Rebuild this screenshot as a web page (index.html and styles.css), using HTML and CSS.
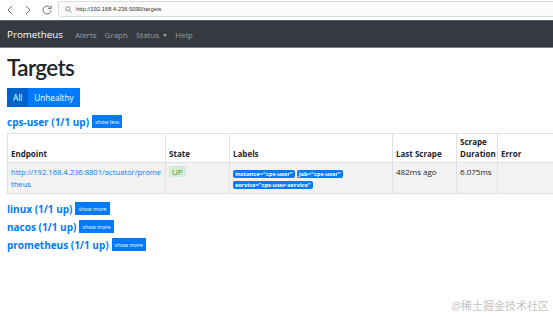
FILE: index.html
```html
<!DOCTYPE html>
<html lang="en">
  <head>
    <meta charset="UTF-8" />
    <meta name="viewport" content="width=device-width, initial-scale=1.0" />
    <title>Prometheus Time Series Collection and Processing Server</title>
    <link rel="stylesheet" href="styles.css">
  </head>
  <body>
    <div class="browser-bar">
      <svg class="tool-icon" width="10" height="12" viewBox="0 0 10 12">
        <path d="M7 2 L3 6 L7 10" fill="none" stroke="#6b6f73" stroke-width="1" />
      </svg>
      <svg class="tool-icon" width="10" height="12" viewBox="0 0 10 12">
        <path d="M3 2 L7 6 L3 10" fill="none" stroke="#6b6f73" stroke-width="1" />
      </svg>
      <svg class="tool-icon" width="12" height="12" viewBox="0 0 12 12">
        <path d="M9.6 4.2 A4 4 0 1 0 10 6.5" fill="none" stroke="#6b6f73" stroke-width="1" />
        <path d="M10.2 1.6 L10.2 4.6 L7.2 4.6" fill="none" stroke="#6b6f73" stroke-width="1" />
      </svg>
      <div class="address">
        <svg width="7" height="7" viewBox="0 0 7 7">
          <circle cx="2.8" cy="2.8" r="2.1" fill="none" stroke="#777" stroke-width="0.8" />
          <path d="M4.4 4.4 L6.5 6.5" stroke="#777" stroke-width="0.8" />
        </svg>
        <span class="url">http://192.168.4.236:9090/targets</span>
      </div>
    </div>

    <nav class="navbar">
      <a class="brand" href="#">Prometheus</a>
      <a class="nav-link" href="#">Alerts</a>
      <a class="nav-link" href="#">Graph</a>
      <a class="nav-link" href="#">Status <span class="caret"></span></a>
      <a class="nav-link" href="#">Help</a>
    </nav>

    <main class="container">
      <h1>Targets</h1>
      <div class="btn-group">
        <button class="btn btn-active">All</button>
        <button class="btn">Unhealthy</button>
      </div>

      <div class="pool">
        <div class="pool-head">
          <a href="#">cps-user (1/1 up)</a>
          <button class="btn-xs">show less</button>
        </div>
        <table class="targets">
          <colgroup>
            <col style="width: 158px" />
            <col style="width: 64px" />
            <col style="width: 163px" />
            <col style="width: 64px" />
            <col style="width: 41px" />
            <col />
          </colgroup>
          <thead>
            <tr>
              <th>Endpoint</th>
              <th>State</th>
              <th>Labels</th>
              <th>Last Scrape</th>
              <th>Scrape Duration</th>
              <th>Error</th>
            </tr>
          </thead>
          <tbody>
            <tr>
              <td class="endpoint"><a href="#">http://192.168.4.236:8801/actuator/prometheus</a></td>
              <td><span class="state-up">UP</span></td>
              <td class="labels">
                <span class="label">instance="cps-user"</span>
                <span class="label">job="cps-user"</span>
                <span class="label">service="cps-user-service"</span>
              </td>
              <td>482ms ago</td>
              <td>6.075ms</td>
              <td></td>
            </tr>
          </tbody>
        </table>
      </div>

      <div class="pool-head">
        <a href="#">linux (1/1 up)</a>
        <button class="btn-xs">show more</button>
      </div>
      <div class="pool-head">
        <a href="#">nacos (1/1 up)</a>
        <button class="btn-xs">show more</button>
      </div>
      <div class="pool-head">
        <a href="#">prometheus (1/1 up)</a>
        <button class="btn-xs">show more</button>
      </div>
    </main>

    <div class="watermark">@稀土掘金技术社区</div>
  </body>
</html>
```

FILE: styles.css
```css
body {
  margin: 0;
  overflow: hidden;
  font-family: "Open Sans", "Noto Sans CJK SC", sans-serif;
  color: #212529;
  background-color: #fff;
}
a {
  text-decoration: none;
}
.browser-bar {
  height: 20px;
  display: flex;
  align-items: center;
  padding-left: 5px;
  background-color: #fff;
}
.tool-icon {
  flex: none;
  margin-right: 8px;
}
.address {
  flex: 1;
  height: 14px;
  margin-top: -2px;
  margin-left: -3px;
  margin-right: -4px;
  display: flex;
  align-items: center;
  gap: 4px;
  padding-left: 6px;
  border: 1px solid #dcdcdc;
  border-radius: 2px;
  background-color: #fafafa;
}
.url {
  font-family: "Liberation Sans", sans-serif;
  font-size: 5.8px;
  color: #333;
}
.navbar {
  display: flex;
  align-items: center;
  padding: 0 7px;
  background-color: #343a40;
  border-top: 1px solid #5b6066;
  border-bottom: 1px solid #7c8085;
  height: 26px;
}
.brand {
  color: #fff;
  font-size: 9.8px;
  margin-right: 12px;
}
.nav-link {
  color: rgba(255, 255, 255, 0.5);
  font-size: 8px;
  margin-right: 8px;
}
.caret {
  display: inline-block;
  margin-left: 2px;
  vertical-align: 1px;
  border-top: 3px solid rgba(255, 255, 255, 0.5);
  border-left: 2.5px solid transparent;
  border-right: 2.5px solid transparent;
}
.container {
  padding: 0 0 0 7px;
}
h1 {
  margin: 6px 0 6px 0;
  font-family: Lato, "Open Sans", sans-serif;
  font-size: 22.4px;
  font-weight: 600;
  letter-spacing: -0.6px;
  line-height: 28px;
}
.btn-group {
  display: flex;
}
.btn {
  height: 19px;
  padding: 0 6px;
  border: none;
  font-family: inherit;
  font-size: 8.2px;
  color: #fff;
  background-color: #007bff;
}
.btn-active {
  background-color: #0062cc;
}
.pool {
  margin-top: 8px;
}
.pool-head {
  display: flex;
  align-items: center;
  gap: 3px;
  height: 13px;
  margin-bottom: 5px;
}
.pool-head a {
  font-size: 10px;
  font-weight: 700;
  color: #007bff;
}
.btn-xs {
  height: 13px;
  padding: 0 3px;
  border: none;
  font-family: inherit;
  font-size: 5.4px;
  color: #fff;
  background-color: #007bff;
}
.targets {
  width: 552px;
  table-layout: fixed;
  border-collapse: collapse;
  font-size: 8px;
  line-height: 12px;
  margin-bottom: 8px;
}
.targets th,
.targets td {
  padding: 2px 3px;
  border: 1px solid #dee2e6;
  text-align: left;
}
.targets th {
  vertical-align: bottom;
  font-weight: 700;
}
.targets td {
  vertical-align: top;
  padding-top: 3px;
  padding-bottom: 3px;
}
.targets tbody tr {
  background-color: #f2f2f2;
}
.endpoint {
  padding-right: 1px;
}
.endpoint a {
  font-size: 7.6px;
  color: #007bff;
  word-break: break-all;
}
.state-up {
  display: inline-block;
  padding: 0 3px;
  line-height: 11px;
  border-radius: 2px;
  color: #28a745;
  background-color: #d4edda;
}
.labels {
  line-height: 11px;
}
.targets .labels {
  padding-top: 4px;
}
.label {
  display: inline-block;
  padding: 0 2px;
  line-height: 8px;
  border-radius: 2px;
  font-size: 5.8px;
  font-weight: 700;
  color: #fff;
  background-color: #007bff;
}
.watermark {
  position: absolute;
  right: 4px;
  bottom: 4px;
  font-size: 11px;
  color: #c4c4c4;
}
```
